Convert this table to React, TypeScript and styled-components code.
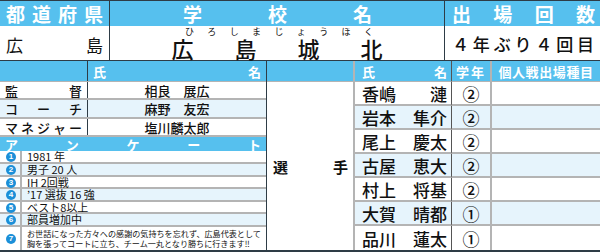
import styled, { createGlobalStyle } from 'styled-components'

const GlobalStyle = createGlobalStyle`
  html, body { margin: 0; padding: 0; background: #ffffff; }
  body {
    font-family: "Noto Sans CJK JP", "Noto Sans", sans-serif;
    color: #111111;
  }
`

const BLUE = '#56c0ee'
const LIGHT = '#e6f4fc'
const DARK = '#2e3c46'
const GRAY = '#b4b4b4'

const Sheet = styled.div`
  width: 600px;
  height: 252px;
  box-sizing: border-box;
  border-top: 1px solid ${DARK};
  border-bottom: 2px solid ${DARK};
  display: grid;
  grid-template-rows: 25px 35px 1fr;
`

const TopRow = styled.div<{ $head?: boolean }>`
  display: grid;
  grid-template-columns: 110px 335px 1fr;
  background: ${p => (p.$head ? BLUE : '#ffffff')};
  border-bottom: ${p => (p.$head ? 'none' : `1px solid ${DARK}`)};
  box-sizing: border-box;
`

const TopCell = styled.div<{ $last?: boolean }>`
  border-right: ${p => (p.$last ? 'none' : `1px solid ${DARK}`)};
  box-sizing: border-box;
  min-width: 0;
`

const HeadTitle = styled.div<{ $pad: string }>`
  height: 100%;
  display: flex;
  justify-content: space-between;
  align-items: center;
  padding: ${p => p.$pad};
  color: #ffffff;
  font-weight: 700;
  font-size: 19px;
  line-height: 1;
`

const Spread = styled.div<{ $pad?: string }>`
  height: 100%;
  box-sizing: border-box;
  display: flex;
  justify-content: space-between;
  align-items: center;
  padding: ${p => p.$pad ?? '0'};
`

const PrefValue = styled(Spread)`
  font-size: 17px;
  line-height: 1;
  padding-top: 2px;
`

const SchoolCell = styled.div`
  height: 100%;
  display: flex;
  flex-direction: column;
  align-items: center;
  box-sizing: border-box;
`

const Ruby = styled.div`
  width: 188px;
  display: flex;
  justify-content: space-between;
  font-size: 9px;
  line-height: 11px;
  height: 11px;
  margin-left: 4px;
`

const SchoolName = styled.div`
  width: 211px;
  display: flex;
  justify-content: space-between;
  font-size: 22px;
  font-weight: 500;
  line-height: 23px;
`

const CountValue = styled(Spread)`
  font-size: 17px;
  font-weight: 500;
  line-height: 1;
`

const Bottom = styled.div`
  display: grid;
  grid-template-columns: 267px 1fr;
  min-height: 0;
`

const Left = styled.div`
  display: grid;
  grid-template-rows: 21px 18px 19px 18px 14px 13px 13px 12px 13px 12px 13px 1fr;
  border-right: 1px solid ${DARK};
  box-sizing: border-box;
  min-height: 0;
`

const LeftHead = styled.div`
  display: grid;
  grid-template-columns: 88px 1fr;
  background: ${BLUE};
  border-bottom: 1px solid ${GRAY};
  box-sizing: border-box;
`

const HeadBlank = styled.div`
  border-right: 1px solid ${DARK};
  box-sizing: border-box;
`

const SmallHead = styled(Spread)`
  color: #ffffff;
  font-weight: 700;
  font-size: 13px;
  line-height: 1;
`

const RoleRow = styled.div<{ $alt?: boolean }>`
  display: grid;
  grid-template-columns: 88px 1fr;
  background: ${p => (p.$alt ? LIGHT : '#ffffff')};
  border-bottom: 2px solid ${GRAY};
  box-sizing: border-box;
  font-size: 13px;
  font-weight: 500;
  line-height: 1;
`

const RoleLabel = styled(Spread)`
  border-right: 1px solid ${DARK};
  padding: 0 5px 0 5px;
`

const RoleName = styled.div`
  display: flex;
  align-items: center;
  justify-content: center;
  white-space: pre;
`

const SurveyHead = styled(Spread)`
  background: ${BLUE};
  color: #ffffff;
  font-weight: 700;
  font-size: 13px;
  line-height: 1;
  padding: 0 5px;
`

const SurveyRow = styled.div<{ $alt?: boolean; $last?: boolean }>`
  display: grid;
  grid-template-columns: 22px 1fr;
  background: ${p => (p.$alt ? LIGHT : '#ffffff')};
  border-bottom: ${p => (p.$last ? 'none' : `2px solid ${GRAY}`)};
  box-sizing: border-box;
  min-height: 0;
`

const MarkCell = styled.div`
  display: flex;
  align-items: center;
  justify-content: center;
  border-right: 2px solid ${GRAY};
  padding-left: 2px;
`

const Mark = styled.span`
  width: 10px;
  height: 10px;
  border-radius: 50%;
  background: #1b8fd8;
  color: #ffffff;
  font-family: "Liberation Sans", Arial, sans-serif;
  font-weight: 700;
  font-size: 8px;
  line-height: 10px;
  text-align: center;
`

const SurveyText = styled.div<{ $small?: boolean }>`
  display: flex;
  align-items: center;
  padding-left: 5px;
  font-size: ${p => (p.$small ? '8.1px' : '11px')};
  line-height: ${p => (p.$small ? '10px' : '11px')};
  white-space: pre;
`

const Right = styled.div`
  display: grid;
  grid-template-columns: 88px 97px 40px 1fr;
  grid-template-rows: 21px repeat(7, 1fr);
  min-height: 0;
`

const RHead = styled.div<{ $line?: string; $track?: string }>`
  background: ${BLUE};
  border-right: ${p => p.$line ?? 'none'};
  border-bottom: 1px solid ${GRAY};
  box-sizing: border-box;
  color: #ffffff;
  font-weight: 700;
  font-size: 13px;
  line-height: 1;
  letter-spacing: ${p => p.$track ?? '0'};
  display: flex;
  align-items: center;
  justify-content: center;
`

const PlayerLabel = styled(Spread)`
  grid-row: 2 / span 7;
  border-right: 2px solid ${GRAY};
  font-size: 15px;
  font-weight: 700;
  padding: 0 5px 0 6px;
`

const PCell = styled.div<{ $alt?: boolean; $last?: boolean; $line?: string }>`
  background: ${p => (p.$alt ? LIGHT : '#ffffff')};
  border-bottom: ${p => (p.$last ? 'none' : `2px solid ${GRAY}`)};
  border-right: ${p => p.$line ?? 'none'};
  box-sizing: border-box;
  display: flex;
  align-items: center;
  font-size: 17px;
  font-weight: 500;
  line-height: 1;
`

const NameCell = styled(PCell)`
  justify-content: space-between;
  padding: 0 4px 0 7px;
`

const GradeCell = styled(PCell)`
  justify-content: center;
`

const chars = (s: string) => [...s].map((c, i) => <span key={i}>{c}</span>)

const roles = [
  { label: '監督', name: '相良　展広' },
  { label: 'コーチ', name: '麻野　友宏' },
  { label: 'マネジャー', name: '塩川麟太郎' },
]

const survey = [
  '1981 年',
  '男子 20 人',
  'IH 2回戦',
  '\u201917 選抜 16 強',
  'ベスト8以上',
  '部員増加中',
]

const players = [
  { sei: '香嶋', mei: '漣', grade: '②' },
  { sei: '岩本', mei: '隼介', grade: '②' },
  { sei: '尾上', mei: '慶太', grade: '②' },
  { sei: '古屋', mei: '恵大', grade: '②' },
  { sei: '村上', mei: '将基', grade: '②' },
  { sei: '大賀', mei: '晴都', grade: '①' },
  { sei: '品川', mei: '蓮太', grade: '①' },
]

export default function App() {
  return (
    <>
      <GlobalStyle />
      <Sheet>
        <TopRow $head>
          <TopCell>
            <HeadTitle $pad="0 6px">{chars('都道府県')}</HeadTitle>
          </TopCell>
          <TopCell>
            <HeadTitle $pad="0 72px 0 73px">{chars('学校名')}</HeadTitle>
          </TopCell>
          <TopCell $last>
            <HeadTitle $pad="0 5px 0 7px">{chars('出場回数')}</HeadTitle>
          </TopCell>
        </TopRow>

        <TopRow>
          <TopCell>
            <PrefValue $pad="0 6px 0 6px">{chars('広島')}</PrefValue>
          </TopCell>
          <TopCell>
            <SchoolCell>
              <Ruby>{chars('ひろしまじょうほく')}</Ruby>
              <SchoolName>{chars('広島城北')}</SchoolName>
            </SchoolCell>
          </TopCell>
          <TopCell $last>
            <CountValue $pad="0 6px 0 7px">{chars('４年ぶり４回目')}</CountValue>
          </TopCell>
        </TopRow>

        <Bottom>
          <Left>
            <LeftHead>
              <HeadBlank />
              <SmallHead $pad="0 5px 0 5px">{chars('氏名')}</SmallHead>
            </LeftHead>

            {roles.map((r, i) => (
              <RoleRow key={r.label} $alt={i === 1}>
                <RoleLabel>{chars(r.label)}</RoleLabel>
                <RoleName>{r.name}</RoleName>
              </RoleRow>
            ))}

            <SurveyHead>{chars('アンケート')}</SurveyHead>

            {survey.map((s, i) => (
              <SurveyRow key={i} $alt={i % 2 === 1}>
                <MarkCell>
                  <Mark>{i + 1}</Mark>
                </MarkCell>
                <SurveyText>{s}</SurveyText>
              </SurveyRow>
            ))}

            <SurveyRow $last>
              <MarkCell>
                <Mark>7</Mark>
              </MarkCell>
              <SurveyText $small>
                {'お世話になった方々への感謝の気持ちを忘れず、広島代表として\n胸を張ってコートに立ち、チーム一丸となり勝ちに行きます‼'}
              </SurveyText>
            </SurveyRow>
          </Left>

          <Right>
            <RHead $line={`2px solid ${GRAY}`} />
            <RHead $line="1px solid #555">
              <Spread $pad="0 4px 0 7px" style={{ width: '100%' }}>{chars('氏名')}</Spread>
            </RHead>
            <RHead $line={`2px solid ${GRAY}`} $track="2px">
              学年
            </RHead>
            <RHead $track="0.6px">個人戦出場種目</RHead>

            <PlayerLabel>{chars('選手')}</PlayerLabel>
            {players.map((p, i) => {
              const alt = i % 2 === 1
              const last = i === players.length - 1
              return [
                <NameCell key={`n${i}`} $alt={alt} $last={last} $line="1px solid #555">
                  <span>{p.sei}</span>
                  <span>{p.mei}</span>
                </NameCell>,
                <GradeCell key={`g${i}`} $alt={alt} $last={last} $line={`2px solid ${GRAY}`}>
                  {p.grade}
                </GradeCell>,
                <PCell key={`e${i}`} $alt={alt} $last={last} />,
              ]
            })}
          </Right>
        </Bottom>
      </Sheet>
    </>
  )
}
